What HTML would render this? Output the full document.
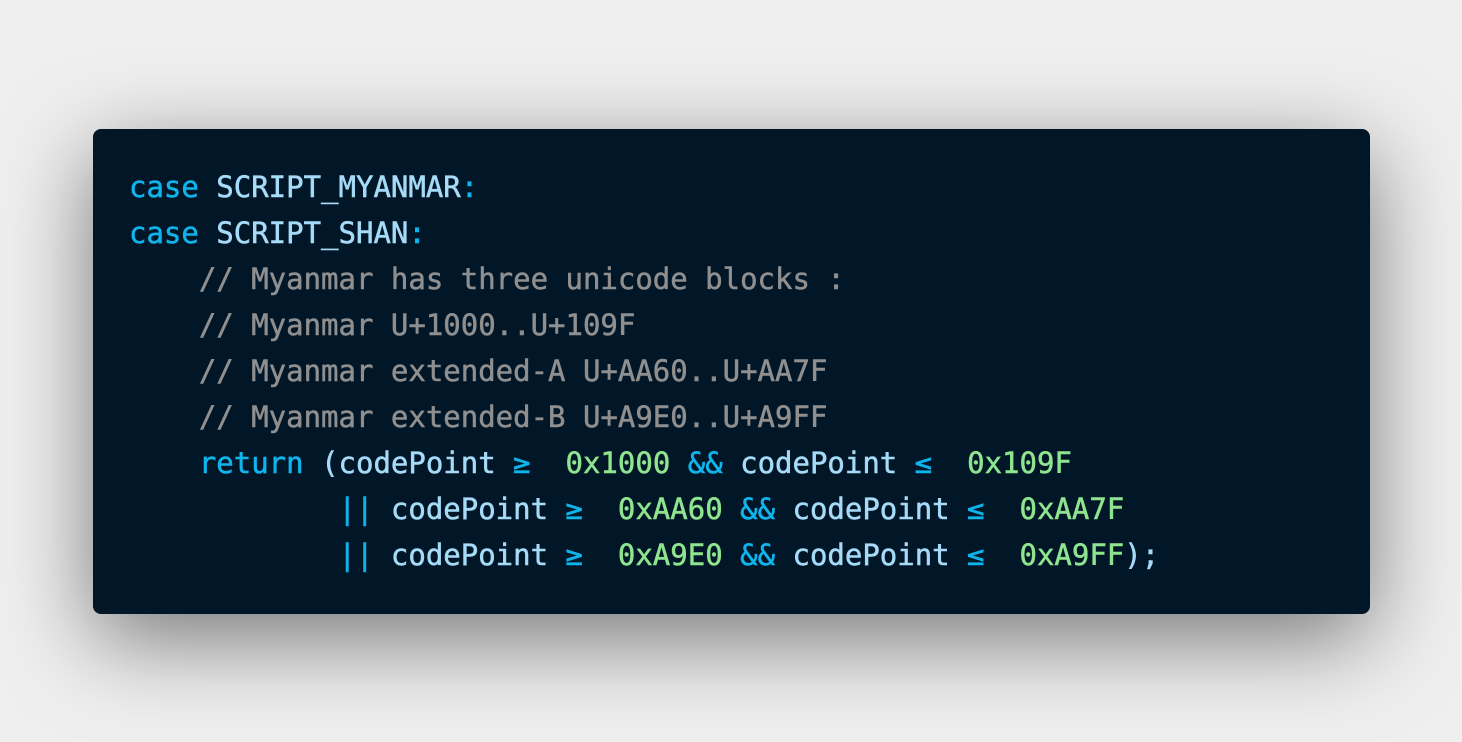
<!DOCTYPE html>
<html><head><meta charset="utf-8"><style>
html,body{margin:0;padding:0;width:1462px;height:742px;background:#efefef;overflow:hidden}
.card{position:absolute;left:93px;top:129px;width:1277px;height:485px;background:#011627;border-radius:8px;box-shadow:0 25px 90px rgba(0,0,0,0.5)}
pre{position:absolute;left:36px;top:35px;margin:0;font-family:"DejaVu Sans Mono","Liberation Mono",monospace;font-size:29px;line-height:46px;color:#a6dbf8;letter-spacing:0;-webkit-text-stroke:0.5px currentColor}
.k{color:#10b4ec}.c{color:#8f8f8f}.n{color:#8fe48f}
</style></head><body>
<div class="card"><pre><span class="k">case</span> SCRIPT_MYANMAR<span class="k">:</span>
<span class="k">case</span> SCRIPT_SHAN<span class="k">:</span>
    <span class="c">// Myanmar has three unicode blocks :</span>
    <span class="c">// Myanmar U+1000..U+109F</span>
    <span class="c">// Myanmar extended-A U+AA60..U+AA7F</span>
    <span class="c">// Myanmar extended-B U+A9E0..U+A9FF</span>
    <span class="k">return</span> (codePoint <span class="k">≥</span>  <span class="n">0x1000</span> <span class="k">&amp;&amp;</span> codePoint <span class="k">≤</span>  <span class="n">0x109F</span>
            <span class="k">||</span> codePoint <span class="k">≥</span>  <span class="n">0xAA60</span> <span class="k">&amp;&amp;</span> codePoint <span class="k">≤</span>  <span class="n">0xAA7F</span>
            <span class="k">||</span> codePoint <span class="k">≥</span>  <span class="n">0xA9E0</span> <span class="k">&amp;&amp;</span> codePoint <span class="k">≤</span>  <span class="n">0xA9FF</span>);</pre></div>
</body></html>
